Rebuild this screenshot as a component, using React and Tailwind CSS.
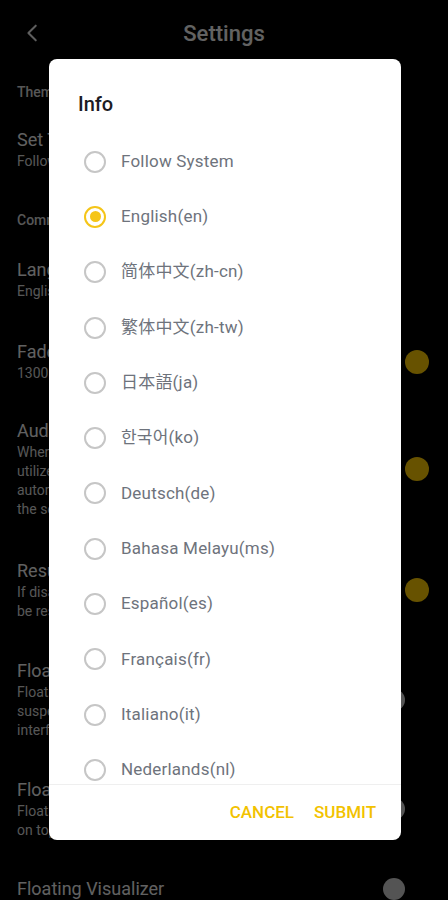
import { useState } from 'react'

const languages = [
  'Follow System',
  'English(en)',
  '简体中文(zh-cn)',
  '繁体中文(zh-tw)',
  '日本語(ja)',
  '한국어(ko)',
  'Deutsch(de)',
  'Bahasa Melayu(ms)',
  'Español(es)',
  'Français(fr)',
  'Italiano(it)',
  'Nederlands(nl)',
  'Português(pt)',
  'Русский(ru)',
]

const font = { fontFamily: 'Roboto, "Noto Sans CJK SC", "Noto Sans CJK KR", "Noto Sans CJK JP", sans-serif' }

function Knob({ on }) {
  return (
    <div className={`flex w-[46px] shrink-0 ${on ? 'justify-end' : 'justify-start'}`}>
      <div className={`rounded-full ${on ? 'h-6 w-6 bg-[#f5c400]' : 'h-[22px] w-[22px] bg-[#c8c8c8]'}`} />
    </div>
  )
}

function SettingRow({ title, lines, toggle, className = '' }) {
  return (
    <div className={`flex items-center pr-[19px] ${className}`}>
      <div className="flex-1">
        <div className="text-[18px] leading-[24px] text-[#e6e6e6]">{title}</div>
        {lines.map((l, i) => (
          <div key={i} className="text-[14px] leading-[19px] text-[#cfcfcf]">{l}</div>
        ))}
      </div>
      {toggle !== undefined && <Knob on={toggle} />}
    </div>
  )
}

export default function App() {
  const [selected, setSelected] = useState(1)

  return (
    <div className="relative h-[900px] w-[448px] overflow-hidden bg-black" style={font}>
      {/* settings page behind */}
      <div className="flex h-[66px] items-center px-[22px]">
        <svg width="22" height="22" viewBox="0 0 24 24" fill="none" stroke="#e0e0e0" strokeWidth="2.2" strokeLinecap="round" strokeLinejoin="round">
          <path d="M15 4l-8 8 8 8" />
        </svg>
        <div className="flex-1 pr-[22px] text-center text-[22px] font-medium text-[#eaeaea]">Settings</div>
      </div>

      <div className="pl-[17px]">
        <div className="mt-[16px] text-[14px] font-medium text-[#cfcfcf]">Theme</div>
        <SettingRow className="mt-[25px]" title="Set Theme" lines={['Follow System']} />
        <div className="mt-[39px] text-[14px] font-medium text-[#cfcfcf]">Common</div>
        <SettingRow className="mt-[27px]" title="Language" lines={['English']} />
        <SettingRow className="mt-[39px]" title="Fade In/Out" lines={['1300ms']} toggle={true} />
        <SettingRow
          className="mt-[36px]"
          title="Audio Focus"
          lines={['When enabled, other apps that', 'utilize audio will pause', 'automatically when playing', 'the selected music']}
          toggle={true}
        />
        <SettingRow
          className="mt-[40px]"
          title="Resume Playback"
          lines={['If disabled, playback will not', 'be resumed automatically']}
          toggle={true}
        />
        <SettingRow
          className="mt-[38px]"
          title="Floating Lyrics"
          lines={['Floating lyrics will be shown', 'suspended above the other', 'interfaces']}
          toggle={false}
        />
        <SettingRow
          className="mt-[38px]"
          title="Floating Lyrics Lock"
          lines={['Floating lyrics stay locked', 'on top of screen']}
          toggle={false}
        />
        <SettingRow className="mt-[37px]" title="Floating Visualizer" lines={[]} toggle={false} />
      </div>

      {/* scrim */}
      <div className="absolute inset-0 bg-black/[0.58]" />

      {/* dialog */}
      <div className="absolute left-[49px] top-[59px] flex h-[781px] w-[352px] flex-col rounded-[8px] bg-white">
        <div className="pl-[29px] pt-[31px] text-[20px] leading-[28px] font-medium text-[#1c1c24]">Info</div>
        <div className="mt-[16px] flex-1 overflow-hidden">
          {languages.map((lang, i) => (
            <button
              key={lang}
              onClick={() => setSelected(i)}
              className="flex h-[55.3px] w-full items-center pl-[35px] text-left"
            >
              {selected === i ? (
                <span className="flex h-[22px] w-[22px] items-center justify-center rounded-full border-2 border-[#f5c518]">
                  <span className="h-[11px] w-[11px] rounded-full bg-[#f5c518]" />
                </span>
              ) : (
                <span className="h-[22px] w-[22px] rounded-full border-2 border-[#c6c6c6]" />
              )}
              <span className="ml-[15px] text-[17px] tracking-[0.2px] text-[#6e737c]">{lang}</span>
            </button>
          ))}
        </div>
        <div className="h-px bg-[#efefef]" />
        <div className="flex h-[55px] items-center justify-end gap-[20px] pr-[25px] text-[17px] font-medium text-[#f2c200]">
          <button>CANCEL</button>
          <button>SUBMIT</button>
        </div>
      </div>
    </div>
  )
}
